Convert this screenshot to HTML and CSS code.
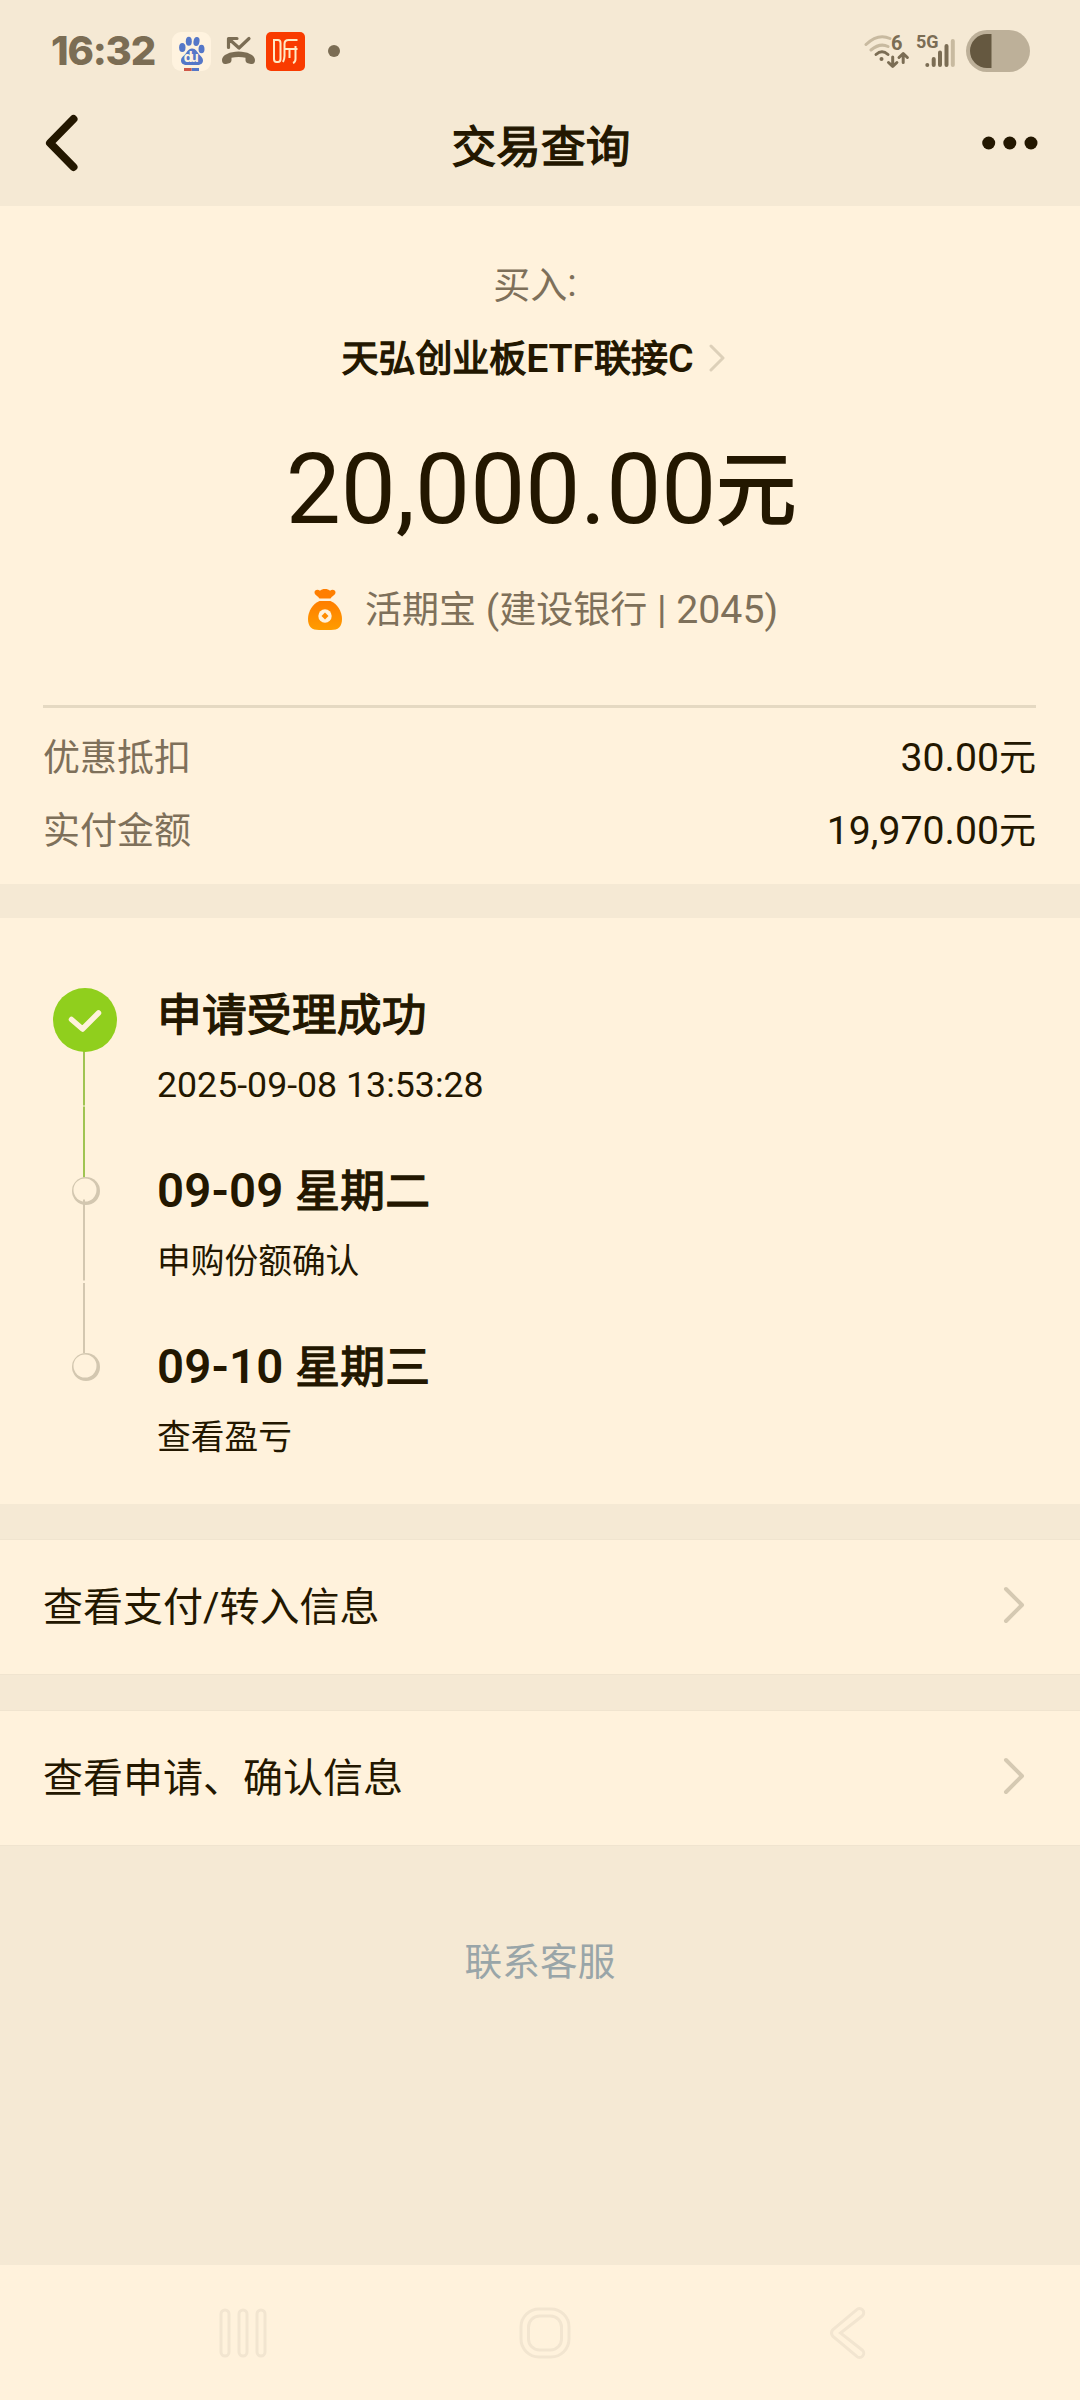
FILE: index.html
```html
<!DOCTYPE html>
<html lang="zh-CN">
<head>
<meta charset="utf-8">
<title>交易查询</title>
<link rel="stylesheet" href="styles.css">
</head>
<body>
<div class="screen">
  <div class="status">
    <span class="clock">16:32</span>
    <svg class="notices" width="172" height="44" viewBox="0 0 172 44">
      <rect x="0" y="2" width="39" height="39" rx="9" fill="#fff3df"/>
      <g fill="#5577c8">
        <ellipse cx="10.300" cy="17.500" rx="3.200" ry="4.500"/>
        <ellipse cx="16.800" cy="11.300" rx="3" ry="4.500"/>
        <ellipse cx="24.500" cy="11.500" rx="3" ry="4.500" transform="rotate(10 24.500 11.500)"/>
        <ellipse cx="29.500" cy="19" rx="3" ry="4.300"/>
        <path d="M20 18.500c-4 0-5 4-7.500 6.500-2 2-3.500 3-3.500 5.500 0 3 2.500 4.500 5.500 4.500h11c3 0 5.500-1.500 5.500-4.500 0-2.500-2-4-4-6.300-2-2.300-3-5.700-7-5.700z"/>
        <rect x="19.500" y="38" width="7.500" height="3"/>
      </g>
      <rect x="12" y="38" width="7.500" height="3" fill="#cf5848"/>
      <text class="du" x="11.800" y="32" textLength="15">du</text>
      <g fill="none" stroke="#7b6d54" stroke-linecap="round" stroke-linejoin="round" stroke-width="3.200">
        <path d="M65 8.500H56.500V17.500M57 9l10 9 10-9.500"/>
      </g>
      <path d="M50 30c0-5 8-8.500 16.500-8.500S83 25 83 30c0 3-1.500 4.500-4 4-3-.5-5.500-1-5.500-4v-2.300c-4-1-9.500-1-14 0V30c0 3-2.500 3.500-5.500 4-2.500.5-4-1-4-4z" fill="#7b6d54"/>
      <rect x="94" y="2" width="39" height="39" rx="5" fill="#f93b00"/>
      <g fill="none" stroke="#ffe9c4" stroke-width="2">
        <path d="M102 10h4q2.500 0 2.500 3v16q0 3-2.500 3h-1.500q-2.500 0-2.500-3zM125.500 10h-9q-4 0-4 4v12q0 3-1.500 6M113 19h12.500M117.500 19v9M123.500 16v13q0 3-2.500 4"/>
      </g>
      <circle cx="162" cy="21" r="6" fill="#7b6d54"/>
    </svg>
    <svg class="signals" width="166" height="44" viewBox="0 0 166 44">
      <g fill="none" stroke-linecap="round" stroke-width="3">
        <path d="M2 14.500Q14 3 26 8.500M7 20q9-7.500 17-3.500" stroke="#c8baa0"/>
        <path d="M12 24.500q6-5.500 12 0" stroke="#7b6d54"/>
      </g>
      <circle cx="17.500" cy="29" r="2" fill="#7b6d54"/>
      <text class="six" x="27" y="19.500">6</text>
      <path d="M28.700 27v9M24.500 32.500l4.200 4 4.200-4M39.200 32.500v-9M35 27.500l4.200-4 4.200 4" fill="none" stroke="#7b6d54" stroke-width="3" stroke-linecap="round" stroke-linejoin="round"/>
      <text class="fiveg" x="52" y="18">5G</text>
      <g fill="none" stroke="#7b6d54" stroke-width="4" stroke-linecap="round">
        <path d="M63.300 35v0M69.700 29v6M76 22.500v12.500M82.500 16v19"/>
        <path d="M88.800 11v24" stroke="#c8baa0"/>
      </g>
      <rect x="102" y="0" width="64" height="42" rx="21" fill="#bdb099"/>
      <path d="M127.500 4v34H123a17 17 0 0 1 0-34z" fill="#655840"/>
    </svg>
  </div>

  <div class="titlebar">
    <svg width="34" height="58" viewBox="0 0 34 58"><path d="M28.500 5 5 29l23.500 24" fill="none" stroke="#231700" stroke-width="8" stroke-linecap="round" stroke-linejoin="round"/></svg>
    <h1>交易查询</h1>
    <svg width="56" height="14" viewBox="0 0 56 14" fill="#231700"><circle cx="6.700" cy="7" r="6.500"/><circle cx="27.800" cy="7" r="6.500"/><circle cx="49" cy="7" r="6.500"/></svg>
  </div>

  <section class="summary">
    <p class="side"><span class="cjk">买入</span>:</p>
    <p class="fund"><span><span class="cjk">天弘创业板</span>ETF<span class="cjk">联接</span>C</span>
      <svg width="16" height="28" viewBox="0 0 16 28"><path d="m2 2 12 12L2 26" fill="none" stroke="#ddd0b9" stroke-width="3" stroke-linecap="round" stroke-linejoin="round"/></svg></p>
    <p class="amount"><span>20,000.00<span class="unit">元</span></span></p>
    <p class="account">
      <svg width="36" height="44" viewBox="0 0 36 44">
        <defs><linearGradient id="bag" x1="0" y1="0" x2="0" y2="1"><stop offset="0" stop-color="#ff7e00"/><stop offset="1" stop-color="#ff9c00"/></linearGradient></defs>
        <path d="M12.500 10.500C11 8 7.500 7 7.500 4.500c0-2.500 3-3.500 5.500-1.800C15 .5 21 .5 23 2.700c2.500-1.700 5.500-.7 5.500 1.800 0 2.500-3.500 3.500-5 6z" fill="#ff7e00"/>
        <path d="M12.500 13h11C30 15.500 35 23 35 31c0 8-4 11-11 11H12C5 42 1 39 1 31c0-8 5-15.500 11.500-18z" fill="url(#bag)"/>
        <circle cx="18" cy="28" r="6.700" fill="#fff2dc"/><path d="m18 24.500 3.500 3.500-3.500 3.500-3.500-3.500z" fill="#ff8c00"/>
      </svg>
      <span class="bank"><span class="cjk">活期宝</span> (<span class="cjk">建设银行</span> | 2045)</span>
    </p>
    <dl class="costs">
      <div><dt>优惠抵扣</dt><dd>30.00<span class="cjk">元</span></dd></div>
      <div><dt>实付金额</dt><dd>19,970.00<span class="cjk">元</span></dd></div>
    </dl>
  </section>

  <section class="progress">
    <svg class="track" width="68" height="398" viewBox="0 0 68 398">
      <path d="M31 64v54.500M31 119.500v71" stroke="#a0c452" stroke-width="2"/>
      <circle cx="32" cy="33" r="32" fill="#90cf1d"/>
      <path d="m18.500 32.500 11 9.500L45.500 26" fill="none" stroke="#fff2dc" stroke-width="5.500" stroke-linecap="round" stroke-linejoin="round"/>
      <g fill="#d3c7b0"><circle cx="33" cy="204" r="14"/><circle cx="33" cy="380" r="14"/></g>
      <g fill="#fff2dc"><circle cx="32" cy="203" r="11.500"/><circle cx="32" cy="379" r="11.500"/></g>
      <path d="M31 212.500v81M31 296v70" stroke="#d3c7b0" stroke-width="2"/>
    </svg>
    <ol class="steps">
      <li><h2><span class="cjk">申请受理成功</span></h2><p class="stamp">2025-09-08 13:53:28</p></li>
      <li><h2>09-09 <span class="cjk">星期二</span></h2><p><span class="cjk">申购份额确认</span></p></li>
      <li><h2>09-10 <span class="cjk">星期三</span></h2><p><span class="cjk">查看盈亏</span></p></li>
    </ol>
  </section>

  <a class="link"><span>查看支付/转入信息</span>
    <svg width="22" height="38" viewBox="0 0 22 38"><path d="m3 3 16 16L3 35" fill="none" stroke="#d5c9b2" stroke-width="4" stroke-linecap="round" stroke-linejoin="round"/></svg></a>
  <a class="link"><span>查看申请、确认信息</span>
    <svg width="22" height="38" viewBox="0 0 22 38"><path d="m3 3 16 16L3 35" fill="none" stroke="#d5c9b2" stroke-width="4" stroke-linecap="round" stroke-linejoin="round"/></svg></a>

  <p class="contact">联系客服</p>

  <nav class="navbar">
    <svg width="48" height="52" viewBox="0 0 48 52"><g class="ghost"><rect x="2" y="3" width="8" height="46" rx="4"/><rect x="20" y="3" width="8" height="46" rx="4"/><rect x="38" y="3" width="8" height="46" rx="4"/></g></svg>
    <svg class="home" width="52" height="52" viewBox="0 0 52 52"><g class="ghost"><rect x="2" y="2" width="48" height="48" rx="18"/><rect x="9.500" y="9" width="33" height="34" rx="11"/></g></svg>
    <svg width="36" height="52" viewBox="0 0 36 52"><path class="ghost" d="M26.500 2.800 3 22.500q-3 3.500 0 7L26.500 49.200a4.200 4.200 0 0 0 6-6L10.500 26l22-17.200a4.200 4.200 0 0 0-6-6z"/></svg>
  </nav>
</div>
</body>
</html>
```
FILE: styles.css
```css
* { box-sizing: border-box; margin: 0; padding: 0; }

body {
  width: 1080px;
  background: #f5e9d4;
  color: #231700;
  font-family: Roboto, "Noto Sans CJK SC", sans-serif;
}

svg { display: block; flex: none; }

.screen { display: flex; flex-direction: column; height: 2400px; }
.cjk { font-size: 0.945em; }

/* Medium-weight Chinese text: regular glyphs with a thin outline */
.titlebar h1,
.fund .cjk,
.unit,
.steps h2 .cjk {
  font-weight: 400;
  -webkit-text-stroke: 1.300px currentColor;
}

.status { display: flex; height: 102px; padding: 30px 50px 0 51px; }
.clock {
  width: 121px;
  font: 800 40px/42px Inter, sans-serif;
  letter-spacing: -1.200px;
  color: #7b6d54;
}
.signals { margin-left: auto; }
.du { font: 700 14px Inter, sans-serif; fill: #fff3df; }
.six { font: 700 20px Roboto, sans-serif; fill: #7b6d54; }
.fiveg { font: 700 18px Roboto, sans-serif; fill: #7b6d54; }

.titlebar {
  display: flex;
  align-items: center;
  justify-content: space-between;
  height: 104px;
  padding: 0 42px 23px 45px;
}
.titlebar h1 {
  padding: 10px 0 0 21px;
  font-size: 44.700px;
  line-height: 60px;
}

.summary { height: 678px; padding: 0 44px 0 43px; background: #fff2dc; }
.summary p { display: flex; justify-content: center; align-items: center; }
.summary .side { height: 60px; margin-top: 47px; padding-right: 9px; font-size: 39.200px; color: #7e705a; }
.summary .fund { gap: 16px; height: 60px; margin-top: 13px; padding-right: 12px; font-size: 39.200px; font-weight: 600; letter-spacing: -0.100px; }
.fund svg { margin-top: 4px; }
.summary .amount { height: 120px; margin-top: 44px; padding-left: 3px; font-size: 98px; line-height: 120px; }
.unit { font-size: 80px; line-height: 1; vertical-align: 5px; }
.amount .unit { -webkit-text-stroke-width: 2px; }
.summary .account { gap: 22px; height: 60px; margin-top: 30px; padding-left: 6px; font-size: 39.200px; color: #7e705a; }
.bank { padding-bottom: 6px; }

.costs { margin-top: 65px; padding-top: 15px; border-top: 3px solid #e5d9c2; }
.costs div { display: flex; justify-content: space-between; height: 73px; font-size: 39.200px; line-height: 71px; }
.costs dt { font-size: 37px; color: #7e705a; }

.progress { display: flex; gap: 36px; height: 586px; margin-top: 34px; padding: 69px 53px 0; background: #fff2dc; }
.steps { padding-top: 1px; list-style: none; }
.steps li { height: 176px; }
.steps h2 { height: 60px; font-size: 47.400px; font-weight: 600; line-height: 54px; letter-spacing: 0.150px; }
.steps p { margin-top: 13px; font-size: 35.700px; line-height: 48px; }

.link {
  display: flex;
  align-items: center;
  justify-content: space-between;
  height: 134px;
  margin-top: 36px;
  padding: 0 55px 4px 43px;
  background: #fff2dc;
  box-shadow: 0 0 1px #dccfb6;
  font-size: 40px;
}
.link span { padding-bottom: 3px; }
.link + .link { margin-top: 37px; }

.contact { margin-top: 87px; color: #99a5a8; font-size: 37.700px; line-height: 60px; text-align: center; }

.navbar {
  display: flex;
  align-items: center;
  justify-content: space-between;
  height: 135px;
  margin-top: auto;
  padding: 0 214px 0 219px;
  background: #fff2dc;
}
.home { margin-right: 8px; }
.ghost { fill: none; stroke: #f2e5d0; stroke-width: 3; }
```
